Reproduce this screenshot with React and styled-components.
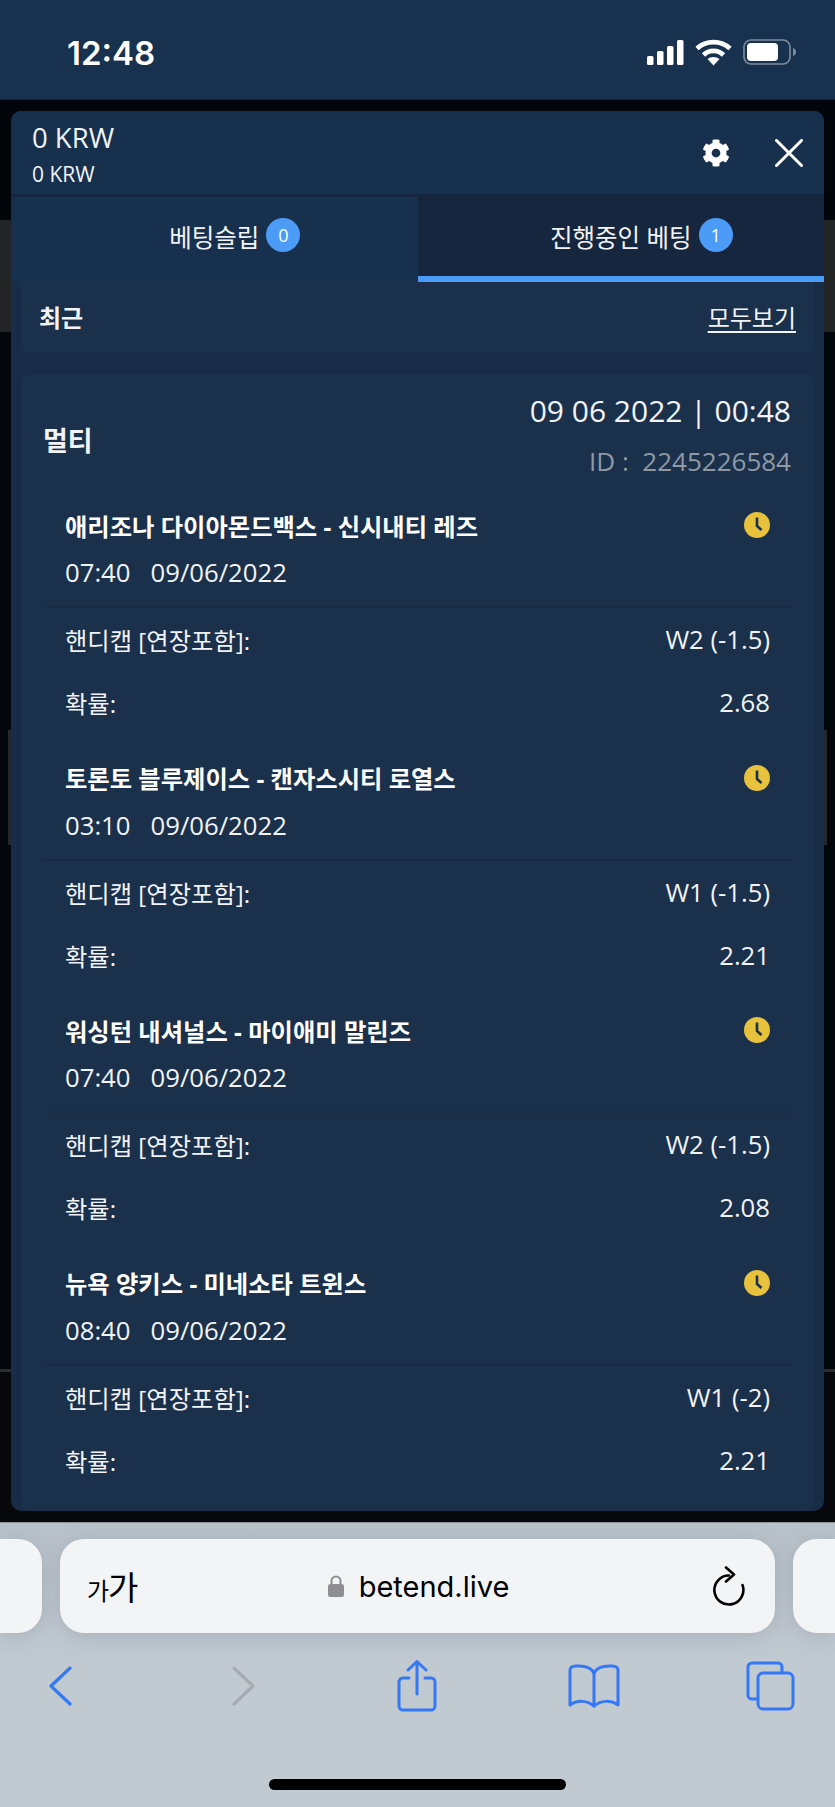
import React from 'react'
import styled, { createGlobalStyle } from 'styled-components'
import { FaCog } from 'react-icons/fa'

const GlobalStyle = createGlobalStyle`
	html, body {
		margin: 0;
		padding: 0;
		background: #c1c9d1;
	}
	* {
		box-sizing: border-box;
	}
`

const sans = `"Open Sans", "Noto Sans CJK KR", sans-serif`

const Screen = styled.div`
	width: 835px;
	height: 1807px;
	display: flex;
	flex-direction: column;
	overflow: hidden;
	font-family: ${sans};
	color: #f1f3f5;
`

const StatusBar = styled.div`
	height: 100px;
	flex: none;
	background: #18314e;
	display: flex;
	align-items: center;
	justify-content: space-between;
	padding: 0 38px 0 67px;
	border-bottom: 1px solid #12233a;
`

const Clock = styled.div`
	font-family: Inter, sans-serif;
	font-weight: 600;
	font-size: 33px;
	color: #fff;
	margin-top: 7px;
`

const StatusIcons = styled.div`
	display: flex;
	align-items: center;
	gap: 11px;
	margin-top: 5px;
`

const Stage = styled.div`
	height: 1422px;
	flex: none;
	padding: 11px 11px;
	background:
		linear-gradient(#23282c, #23282c) 8px 630px / 3px 115px no-repeat,
		linear-gradient(#23282c, #23282c) 824px 630px / 3px 115px no-repeat,
		linear-gradient(
			#02060b 0,
			#02060b 120px,
			#222426 120px,
			#222426 232px,
			#03070c 232px,
			#03070c 1269px,
			#2a2c2e 1269px,
			#2a2c2e 1272px,
			#06080c 1272px
		);
`

const Panel = styled.div`
	height: 1400px;
	border-radius: 10px;
	background: #182c47;
	overflow: hidden;
	display: flex;
	flex-direction: column;
`

const PanelHead = styled.div`
	height: 83px;
	flex: none;
	background: #17304e;
	display: flex;
	align-items: center;
	justify-content: space-between;
	padding: 0 21px 0 21px;
`

const Balance = styled.div`
	display: flex;
	flex-direction: column;
`

const BalanceMain = styled.div`
	font-size: 27.5px;
	line-height: 36px;
	margin-top: 7px;
`

const BalanceSub = styled.div`
	font-size: 21px;
	line-height: 36px;
`

const HeadActions = styled.div`
	display: flex;
	align-items: center;
	gap: 45px;
	color: #fff;
`

const Tabs = styled.div`
	display: grid;
	grid-template-columns: 1fr 1fr;
	height: 88px;
	flex: none;
	background: #152640;
	padding-top: 3px;
`

const Tab = styled.div`
	display: flex;
	justify-content: center;
	align-items: flex-start;
	font-size: 24.5px;
	line-height: 36px;
	background: ${props => (props.$active ? '#15263e' : '#17304e')};
	border-bottom: ${props => (props.$active ? '6px solid #4c9bf6' : '6px solid #17304e')};
	margin-top: ${props => (props.$active ? '-3px' : '0')};
	padding-top: ${props => (props.$active ? '26px' : '23px')};
`

const TabLabel = styled.span`
	position: relative;
`

const Badge = styled.span`
	position: absolute;
	left: 100%;
	top: -2px;
	margin-left: 7px;
	width: 34px;
	height: 34px;
	border-radius: 50%;
	background: #4c9bf6;
	color: #fff;
	font-size: 18px;
	line-height: 34px;
	text-align: center;
`

const Content = styled.div`
	padding: 0 10px;
	display: flex;
	flex-direction: column;
	gap: 21px;
	flex: 1;
	min-height: 0;
`

const RecentRow = styled.div`
	height: 71px;
	flex: none;
	background: #1b304b;
	border-radius: 0 0 10px 10px;
	display: flex;
	align-items: center;
	justify-content: space-between;
	padding: 0 18px 2px 18px;
	font-size: 24px;
`

const RecentTitle = styled.span`
	font-weight: 700;
`

const SeeAll = styled.span`
	text-decoration: underline;
	text-underline-offset: 4px;
`

const Card = styled.div`
	flex: 1;
	background: #1b304b;
	border-radius: 10px;
`

const CardHead = styled.div`
	height: 127px;
	display: flex;
	justify-content: space-between;
	align-items: center;
	padding: 0 23px 0 22px;
`

const CardTitle = styled.div`
	font-size: 27px;
	font-weight: 700;
	margin-top: 4px;
`

const CardMeta = styled.div`
	display: flex;
	flex-direction: column;
	align-items: flex-end;
	padding-bottom: 4px;
`

const DateLine = styled.div`
	font-size: 30px;
	line-height: 50px;
`

const IdLine = styled.div`
	font-size: 26px;
	line-height: 50px;
	color: #8f99a4;
	white-space: pre;
`

const Bet = styled.div`
	padding-bottom: 19.6px;
`

const BetTitleRow = styled.div`
	height: 48px;
	display: flex;
	align-items: center;
	justify-content: space-between;
	padding: 0 44px;
`

const BetTitle = styled.div`
	font-size: 24.3px;
	font-weight: 700;
	color: #fff;
`

const BetTime = styled.div`
	height: 48px;
	line-height: 48px;
	padding-left: 44px;
	font-size: 25.7px;
	white-space: pre;
	margin-bottom: 9px;
`

const Divider = styled.div`
	height: 2px;
	background: #192c44;
	margin: 0 22px;
`

const InfoRow = styled.div`
	height: 63px;
	display: flex;
	align-items: center;
	justify-content: space-between;
	padding: 0 44px;
	font-size: 24.3px;
`

const InfoValue = styled.span`
	font-size: 25.7px;
`

const Browser = styled.div`
	flex: 1;
	background: linear-gradient(#b9c1c9, #c1c9d1 40%);
	border-top: 1px solid #8f959b;
	padding-top: 16px;
	display: flex;
	flex-direction: column;
`

const AddressRow = styled.div`
	display: flex;
	gap: 18px;
	height: 94px;
	flex: none;
`

const SideTab = styled.div`
	flex: 1;
	background: #f3f4f6;
	border-radius: ${props => (props.$left ? '0 24px 24px 0' : '24px 0 0 24px')};
	box-shadow: 0 4px 22px rgba(110, 120, 130, 0.3);
`

const Address = styled.div`
	width: 715px;
	flex: none;
	background: #f3f4f6;
	border-radius: 24px;
	box-shadow: 0 4px 22px rgba(110, 120, 130, 0.3);
	display: flex;
	align-items: center;
	justify-content: space-between;
	padding: 0 29px 0 27px;
	color: #000;
`

const FontSize = styled.span`
	font-family: "Noto Sans CJK KR", sans-serif;
	display: flex;
	align-items: baseline;
	width: 60px;
	letter-spacing: -1px;
`

const FontSizeSmall = styled.span`
	font-size: 24px;
`

const FontSizeLarge = styled.span`
	font-size: 33px;
`

const Url = styled.div`
	display: flex;
	align-items: center;
	gap: 15px;
	font-family: Inter, sans-serif;
	font-size: 29px;
	margin-left: -22px;
`

const Toolbar = styled.div`
	display: grid;
	grid-template-columns: 182px 174px 177px 176px 48px;
	padding: 26px 0 0 37px;
	height: 80px;
	flex: none;
`

const ToolButton = styled.div`
	width: 48px;
	height: 54px;
	display: flex;
	align-items: center;
	justify-content: center;
`

const HomeBar = styled.div`
	width: 297px;
	height: 11px;
	border-radius: 6px;
	background: #000;
	margin: 66px auto 0;
`

const bets = [
	{ title: '애리조나 다이아몬드백스 - 신시내티 레즈', time: '07:40   09/06/2022', pick: 'W2 (-1.5)', odds: '2.68' },
	{ title: '토론토 블루제이스 - 캔자스시티 로열스', time: '03:10   09/06/2022', pick: 'W1 (-1.5)', odds: '2.21' },
	{ title: '워싱턴 내셔널스 - 마이애미 말린즈', time: '07:40   09/06/2022', pick: 'W2 (-1.5)', odds: '2.08' },
	{ title: '뉴욕 양키스 - 미네소타 트윈스', time: '08:40   09/06/2022', pick: 'W1 (-2)', odds: '2.21' },
]

const ClockIcon = () => (
	<svg width="26" height="26" viewBox="0 0 26 26">
		<circle cx="13" cy="13" r="13" fill="#e8c23c" />
		<path d="M13 5.5V14l4.5 4" fill="none" stroke="#1b304b" strokeWidth="2.6" />
	</svg>
)

const SignalIcon = () => (
	<svg width="37" height="25" viewBox="0 0 37 25" fill="#fff">
		<rect x="0" y="16" width="6.5" height="9" rx="1.5" />
		<rect x="10" y="11" width="6.5" height="14" rx="1.5" />
		<rect x="20" y="6" width="6.5" height="19" rx="1.5" />
		<rect x="30" y="0" width="6.5" height="25" rx="1.5" />
	</svg>
)

const WifiIcon = () => (
	<svg width="37" height="27" viewBox="0 0 37 27" fill="none" stroke="#fff" strokeWidth="4.6">
		<path d="M2 9.500C11 1 26 1 35 9.500" />
		<path d="M8.500 16C14 10.500 23 10.500 28.500 16" />
		<path d="M18.500 26.500l-6-6.500c3.200-2.800 8.800-2.800 12 0z" fill="#fff" stroke="none" />
	</svg>
)

const BatteryIcon = () => (
	<svg width="54" height="26" viewBox="0 0 54 26">
		<rect x="1" y="1" width="46" height="24" rx="7" fill="none" stroke="#7f8c9c" strokeWidth="1.6" />
		<rect x="4" y="4" width="31" height="18" rx="4" fill="#fff" />
		<path d="M50 9c2 .6 3 2.200 3 4s-1 3.400-3 4z" fill="#7f8c9c" />
	</svg>
)

const CloseIcon = () => (
	<svg width="28" height="28" viewBox="0 0 28 28" stroke="#fff" strokeWidth="3" strokeLinecap="round">
		<path d="M1.500 1.500l25 25M26.500 1.500l-25 25" />
	</svg>
)

const LockIcon = () => (
	<svg width="16" height="22" viewBox="0 0 16 22">
		<path d="M3.500 10V6a4.500 4.500 0 0 1 9 0v4" fill="none" stroke="#8e8e93" strokeWidth="2" />
		<rect x="0" y="9" width="16" height="13" rx="2.500" fill="#8e8e93" />
	</svg>
)

const ReloadIcon = () => (
	<svg width="34" height="40" viewBox="0 0 34 40" fill="none" stroke="#000" strokeWidth="2.600" strokeLinecap="round" strokeLinejoin="round">
		<path d="M17 9.500A14.500 14.500 0 1 0 30.500 19" />
		<path d="M14 1.500l8 7-8 7" />
	</svg>
)

const blue = '#3478f6'

const BackIcon = () => (
	<svg width="24" height="40" viewBox="0 0 24 40" fill="none" stroke={blue} strokeWidth="3.200" strokeLinecap="round" strokeLinejoin="round">
		<path d="M21 2L2 20l19 18" />
	</svg>
)

const ForwardIcon = () => (
	<svg width="24" height="40" viewBox="0 0 24 40" fill="none" stroke="#a6abb1" strokeWidth="3.200" strokeLinecap="round" strokeLinejoin="round">
		<path d="M3 2l19 18L3 38" />
	</svg>
)

const ShareIcon = () => (
	<svg width="40" height="52" viewBox="0 0 40 52" fill="none" stroke={blue} strokeWidth="3" strokeLinecap="round" strokeLinejoin="round">
		<path d="M12 18H6a4 4 0 0 0-4 4v24a4 4 0 0 0 4 4h28a4 4 0 0 0 4-4V22a4 4 0 0 0-4-4h-6" />
		<path d="M20 34V2M11 10l9-8.500 9 8.500" />
	</svg>
)

const BookIcon = () => (
	<svg width="52" height="44" viewBox="0 0 52 44" fill="none" stroke={blue} strokeWidth="3" strokeLinecap="round" strokeLinejoin="round" style={{ flex: 'none' }}>
		<path d="M26 9C23 3 15 1.500 8 2c-3 .2-6 1-6 4v35c7-5 17-5 24 1 7-6 17-6 24-1V6c0-3-3-3.800-6-4-7-.5-15 1-18 7z" />
		<path d="M26 9v33" />
	</svg>
)

const TabsIcon = () => (
	<svg width="49" height="50" viewBox="0 0 49 50" fill="none" stroke={blue} strokeWidth="3" strokeLinecap="round" strokeLinejoin="round" style={{ flex: 'none' }}>
		<path d="M36 10V6a4 4 0 0 0-4-4H6a4 4 0 0 0-4 4v28a4 4 0 0 0 4 4h5" />
		<rect x="12" y="12" width="35" height="36" rx="5" />
	</svg>
)

export default function App () {
	return (
		<Screen>
			<GlobalStyle />
			<StatusBar>
				<Clock>12:48</Clock>
				<StatusIcons>
					<SignalIcon />
					<WifiIcon />
					<BatteryIcon />
				</StatusIcons>
			</StatusBar>
			<Stage>
				<Panel>
					<PanelHead>
						<Balance>
							<BalanceMain>0 KRW</BalanceMain>
							<BalanceSub>0 KRW</BalanceSub>
						</Balance>
						<HeadActions>
							<FaCog size={28} />
							<CloseIcon />
						</HeadActions>
					</PanelHead>
					<Tabs>
						<Tab><TabLabel>베팅슬립<Badge>0</Badge></TabLabel></Tab>
						<Tab $active><TabLabel>진행중인 베팅<Badge>1</Badge></TabLabel></Tab>
					</Tabs>
					<Content>
						<RecentRow>
							<RecentTitle>최근</RecentTitle>
							<SeeAll>모두보기</SeeAll>
						</RecentRow>
						<Card>
							<CardHead>
								<CardTitle>멀티</CardTitle>
								<CardMeta>
									<DateLine>09 06 2022 | 00:48</DateLine>
									<IdLine>ID :  2245226584</IdLine>
								</CardMeta>
							</CardHead>
							{bets.map(bet => (
								<Bet key={bet.title}>
									<BetTitleRow>
										<BetTitle>{bet.title}</BetTitle>
										<ClockIcon />
									</BetTitleRow>
									<BetTime>{bet.time}</BetTime>
									<Divider />
									<InfoRow>
										<span>핸디캡 [연장포함]:</span>
										<InfoValue>{bet.pick}</InfoValue>
									</InfoRow>
									<InfoRow>
										<span>확률:</span>
										<InfoValue>{bet.odds}</InfoValue>
									</InfoRow>
								</Bet>
							))}
						</Card>
					</Content>
				</Panel>
			</Stage>
			<Browser>
				<AddressRow>
					<SideTab $left />
					<Address>
						<FontSize>
							<FontSizeSmall>가</FontSizeSmall>
							<FontSizeLarge>가</FontSizeLarge>
						</FontSize>
						<Url>
							<LockIcon />
							<span>betend.live</span>
						</Url>
						<ReloadIcon />
					</Address>
					<SideTab />
				</AddressRow>
				<Toolbar>
					<ToolButton><BackIcon /></ToolButton>
					<ToolButton><ForwardIcon /></ToolButton>
					<ToolButton><ShareIcon /></ToolButton>
					<ToolButton><BookIcon /></ToolButton>
					<ToolButton><TabsIcon /></ToolButton>
				</Toolbar>
				<HomeBar />
			</Browser>
		</Screen>
	)
}
